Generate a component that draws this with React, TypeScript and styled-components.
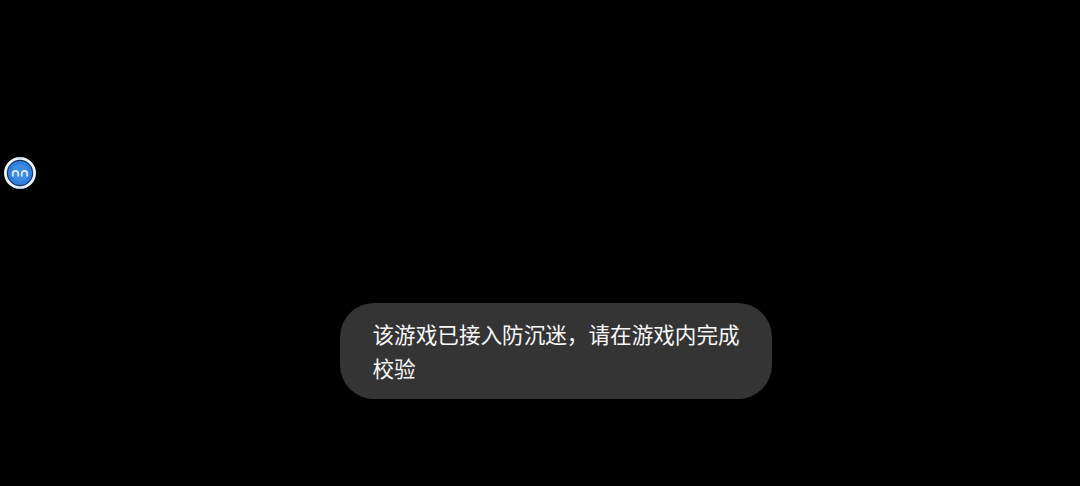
import React from 'react';
import styled, { createGlobalStyle } from 'styled-components';

const GlobalStyle = createGlobalStyle`
  html, body {
    margin: 0;
    padding: 0;
    background: #000;
  }
`;

const ScScreen = styled.div`
  position: relative;
  width: 1080px;
  height: 486px;
  overflow: hidden;
  background: #000;
  display: flex;
  align-items: flex-end;
  padding: 0 0 87px 340px;
  box-sizing: border-box;
`;

const ScToast = styled.div`
  width: 432px;
  height: 96px;
  box-sizing: border-box;
  padding: 14px 30px 0 32.5px;
  border-radius: 34px;
  background: #343434;
  color: #f8f8f8;
  font-family: "Noto Sans CJK SC", "Noto Sans", sans-serif;
  font-size: 21.6px;
  line-height: 34px;
`;

const ScFloatBall = styled.svg`
  position: absolute;
  left: 4px;
  top: 157px;
  width: 32px;
  height: 32px;
`;

const FloatBall = () => (
  <ScFloatBall viewBox="0 0 32 32">
    <circle cx="16" cy="16" r="14.6" fill="#16365c" stroke="#eaf3fc" strokeWidth="2.8" />
    <circle cx="16" cy="16" r="12" fill="#2f80de" />
    <circle cx="16" cy="16" r="8.5" fill="#3f8ce3" />
    <path d="M13 0.8h6M13 31.2h6" stroke="#9cc8f2" strokeWidth="1.2" />
    <path
      d="M8.8 19.4v-2.9a2.7 2.7 0 0 1 5.4 0v2.9M17.8 19.4v-2.9a2.7 2.7 0 0 1 5.4 0v2.9"
      fill="none"
      stroke="#dcebfb"
      strokeWidth="1.8"
    />
  </ScFloatBall>
);

export default function App() {
  return (
    <ScScreen>
      <GlobalStyle />
      <FloatBall />
      <ScToast>{'该游戏已接入防沉迷，请在游戏内完成校验'}</ScToast>
    </ScScreen>
  );
}
